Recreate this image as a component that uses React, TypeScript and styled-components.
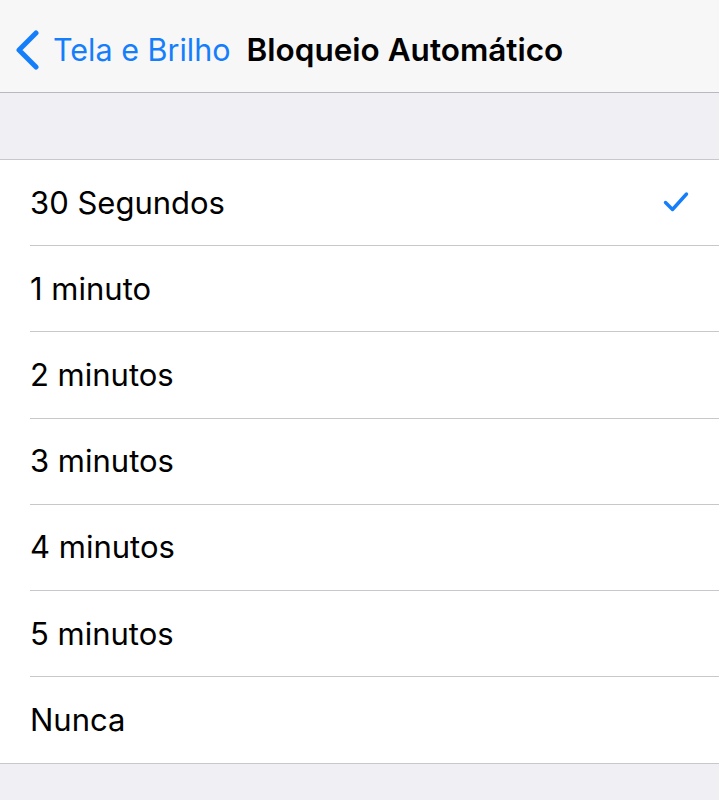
import React from "react";
import styled, { createGlobalStyle } from "styled-components";

const GlobalStyle = createGlobalStyle`
  body {
    margin: 0;
    font-family: Inter, "Liberation Sans", sans-serif;
    background: #efeff4;
    -webkit-font-smoothing: antialiased;
  }
`;

const options = [
  "30 Segundos",
  "1 minuto",
  "2 minutos",
  "3 minutos",
  "4 minutos",
  "5 minutos",
  "Nunca",
];

export default function App() {
  const selected = "30 Segundos";
  return (
    <Page>
      <GlobalStyle />
      <NavBar>
        <BackButton>
          <svg width="26" height="40" viewBox="0 0 26 40">
            <path
              d="M22 3 L5 20 L22 37"
              fill="none"
              stroke="#157efb"
              strokeWidth="5"
              strokeLinecap="round"
              strokeLinejoin="round"
            />
          </svg>
          <BackLabel>Tela e Brilho</BackLabel>
        </BackButton>
        <Title>Bloqueio Automático</Title>
      </NavBar>
      <Spacer />
      <List>
        {options.map((opt) => (
          <Row key={opt}>
            <RowContent>
              <Label>{opt}</Label>
              {opt === selected && (
                <svg width="26" height="22" viewBox="0 0 26 22">
                  <path
                    d="M2.5 11.5 L9.5 18.5 L23.5 3"
                    fill="none"
                    stroke="#157efb"
                    strokeWidth="3.4"
                    strokeLinecap="round"
                    strokeLinejoin="round"
                  />
                </svg>
              )}
            </RowContent>
          </Row>
        ))}
      </List>
    </Page>
  );
}

const Page = styled.div`
  min-height: 800px;
  background: #efeff4;
`;

const NavBar = styled.div`
  height: 93px;
  box-sizing: border-box;
  padding: 8px 0 0 14px;
  display: flex;
  align-items: center;
  background: #f7f7f8;
  border-bottom: 1px solid #b9b9bd;
`;

const BackButton = styled.div`
  display: flex;
  align-items: center;
  gap: 13px;
  margin-right: 16px;
`;

const BackLabel = styled.span`
  color: #157efb;
  font-size: 30.5px;
  line-height: 1;
`;

const Title = styled.span`
  color: #000;
  font-size: 31.5px;
  font-weight: 600;
  line-height: 1;
`;

const Spacer = styled.div`
  height: 66px;
`;

const List = styled.div`
  background: #fff;
  border-top: 1px solid #c8c7cc;
  border-bottom: 1px solid #c8c7cc;
`;

const Row = styled.div`
  padding-left: 30px;
  &:last-child > div {
    border-bottom: none;
  }
`;

const RowContent = styled.div`
  height: 86.2px;
  box-sizing: border-box;
  display: flex;
  align-items: center;
  justify-content: space-between;
  padding-right: 30px;
  padding-bottom: 1px;
  border-bottom: 1px solid #c8c7cc;
`;

const Label = styled.span`
  font-size: 31px;
  color: #000;
  line-height: 1;
`;
